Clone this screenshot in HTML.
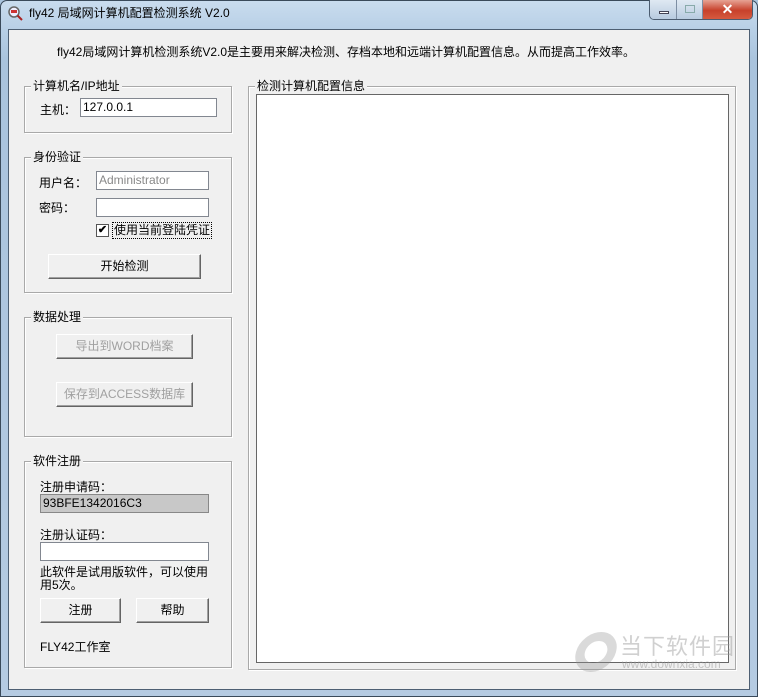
<!DOCTYPE html>
<html><head><meta charset="utf-8"><style>
*{margin:0;padding:0;box-sizing:border-box}
body{width:758px;height:697px;overflow:hidden;background:#a9c4de;font-family:"Liberation Sans","Noto Sans CJK SC","WenQuanYi Zen Hei",sans-serif;font-size:12px;color:#000;position:relative}
.a{position:absolute}
#frame{left:0;top:0;width:758px;height:697px;background:linear-gradient(180deg,#c9dcee 0,#b7cfe6 30px,#a9c3dd 60px,#b5cbe2 100%);border:1px solid #3a4a5a;border-radius:7px 7px 0 0}
#client{left:8px;top:29px;width:742px;height:661px;background:#f0f0f0;border:1px solid #4d5f73}
.g{position:absolute;border:1px solid #a9a9a9;box-shadow:inset 1px 1px 0 #fff,1px 1px 0 #fff}
.g>span{position:absolute;left:6px;top:-9px;background:#f0f0f0;padding:0 2px;font-size:12px;line-height:16px}
.tb{position:absolute;background:#fff;border:1px solid #828790;height:19px;line-height:17px;padding-left:2px;font-size:12px}
.btn{position:absolute;background:#f0f0f0;border:1px solid;border-color:#fff #646464 #646464 #fff;box-shadow:inset -1px -1px 0 #a0a0a0;text-align:center;font-size:12px}
.dis{color:#a0a0a0}
</style></head><body>
<div id="frame" class="a"></div>
<div class="a" style="left:7px;top:5px;width:16px;height:16px"><svg width="16" height="16"><circle cx="7" cy="7" r="5" fill="#eef" stroke="#666" stroke-width="1.5"/><rect x="4" y="5" width="6" height="3" fill="#c33"/><line x1="10.5" y1="10.5" x2="15" y2="15" stroke="#a22" stroke-width="2"/></svg></div>
<div class="a" style="left:29px;top:5px;font-size:12px;line-height:16px">fly42 局域网计算机配置检测系统 V2.0</div>
<div class="a" style="left:649px;top:0;width:104px;height:20px;border:1px solid #4b5c70;border-top:none;border-radius:0 0 5px 5px;overflow:hidden;display:flex">
<div style="width:27px;background:linear-gradient(#dfe9f3,#b8cbe0);border-right:1px solid #7d8ea3;position:relative"><div class="a" style="left:9px;top:11px;width:10px;height:3px;background:#fff;border:1px solid #445"></div></div>
<div style="width:26px;background:linear-gradient(#dfe9f3,#b8cbe0);border-right:1px solid #7d8ea3;position:relative"><div class="a" style="left:8px;top:5px;width:10px;height:8px;border:1px solid #8aa;"></div></div>
<div style="flex:1;background:linear-gradient(#e6a394,#c7412b 55%,#d65a3f);position:relative;color:#fff;font-weight:bold;text-align:center;line-height:18px;font-size:14px">✕</div>
</div>
<div id="client" class="a"></div>
<div class="a" style="left:57px;top:44px;line-height:16px">fly42局域网计算机检测系统V2.0是主要用来解决检测、存档本地和远端计算机配置信息。从而提高工作效率。</div>

<div class="g" style="left:24px;top:86px;width:208px;height:47px"><span>计算机名/IP地址</span></div>
<div class="a" style="left:40px;top:101px">主机：</div>
<div class="tb" style="left:80px;top:98px;width:137px">127.0.0.1</div>

<div class="g" style="left:24px;top:157px;width:208px;height:136px"><span>身份验证</span></div>
<div class="a" style="left:39px;top:174px">用户名：</div>
<div class="tb dis" style="left:96px;top:171px;width:113px;color:#888">Administrator</div>
<div class="a" style="left:39px;top:199px">密码：</div>
<div class="tb" style="left:96px;top:198px;width:113px"></div>
<div class="a" style="left:96px;top:224px;width:13px;height:13px;border:1px solid #555;background:#fff;font-size:11px;line-height:11px;text-align:center;font-weight:bold">✔</div>
<div class="a" style="left:112px;top:222px;border:1px dotted #000;padding:0 1px;line-height:15px">使用当前登陆凭证</div>
<div class="btn" style="left:48px;top:254px;width:153px;height:25px;line-height:23px">开始检测</div>

<div class="g" style="left:24px;top:317px;width:208px;height:120px"><span>数据处理</span></div>
<div class="btn dis" style="left:56px;top:334px;width:137px;height:25px;line-height:23px">导出到WORD档案</div>
<div class="btn dis" style="left:56px;top:382px;width:137px;height:25px;line-height:23px">保存到ACCESS数据库</div>

<div class="g" style="left:24px;top:461px;width:208px;height:207px"><span>软件注册</span></div>
<div class="a" style="left:40px;top:478px">注册申请码：</div>
<div class="tb" style="left:40px;top:494px;width:169px;background:#c8c8c8;border-color:#888">93BFE1342016C3</div>
<div class="a" style="left:40px;top:526px">注册认证码：</div>
<div class="tb" style="left:40px;top:542px;width:169px"></div>
<div class="a" style="left:40px;top:566px;width:172px;line-height:13px">此软件是试用版软件，可以使用<br>用5次。</div>
<div class="btn" style="left:40px;top:598px;width:81px;height:25px;line-height:23px">注册</div>
<div class="btn" style="left:136px;top:598px;width:73px;height:25px;line-height:23px">帮助</div>
<div class="a" style="left:40px;top:638px">FLY42工作室</div>

<div class="g" style="left:248px;top:86px;width:488px;height:584px"><span>检测计算机配置信息</span></div>
<div class="a" style="left:256px;top:94px;width:473px;height:569px;background:#fff;border:1px solid #666"></div>

<div class="a" style="left:576px;top:632px;width:40px;height:40px;border-radius:50%;border:9px solid rgba(150,150,150,.35);transform:skewX(-15deg)"></div>
<div class="a" style="left:620px;top:629px;font-size:22px;color:rgba(150,150,150,.45);letter-spacing:1px">当下软件园</div>
<div class="a" style="left:622px;top:657px;font-size:12px;color:rgba(150,150,150,.5)">www.downxia.com</div>
</body></html>
